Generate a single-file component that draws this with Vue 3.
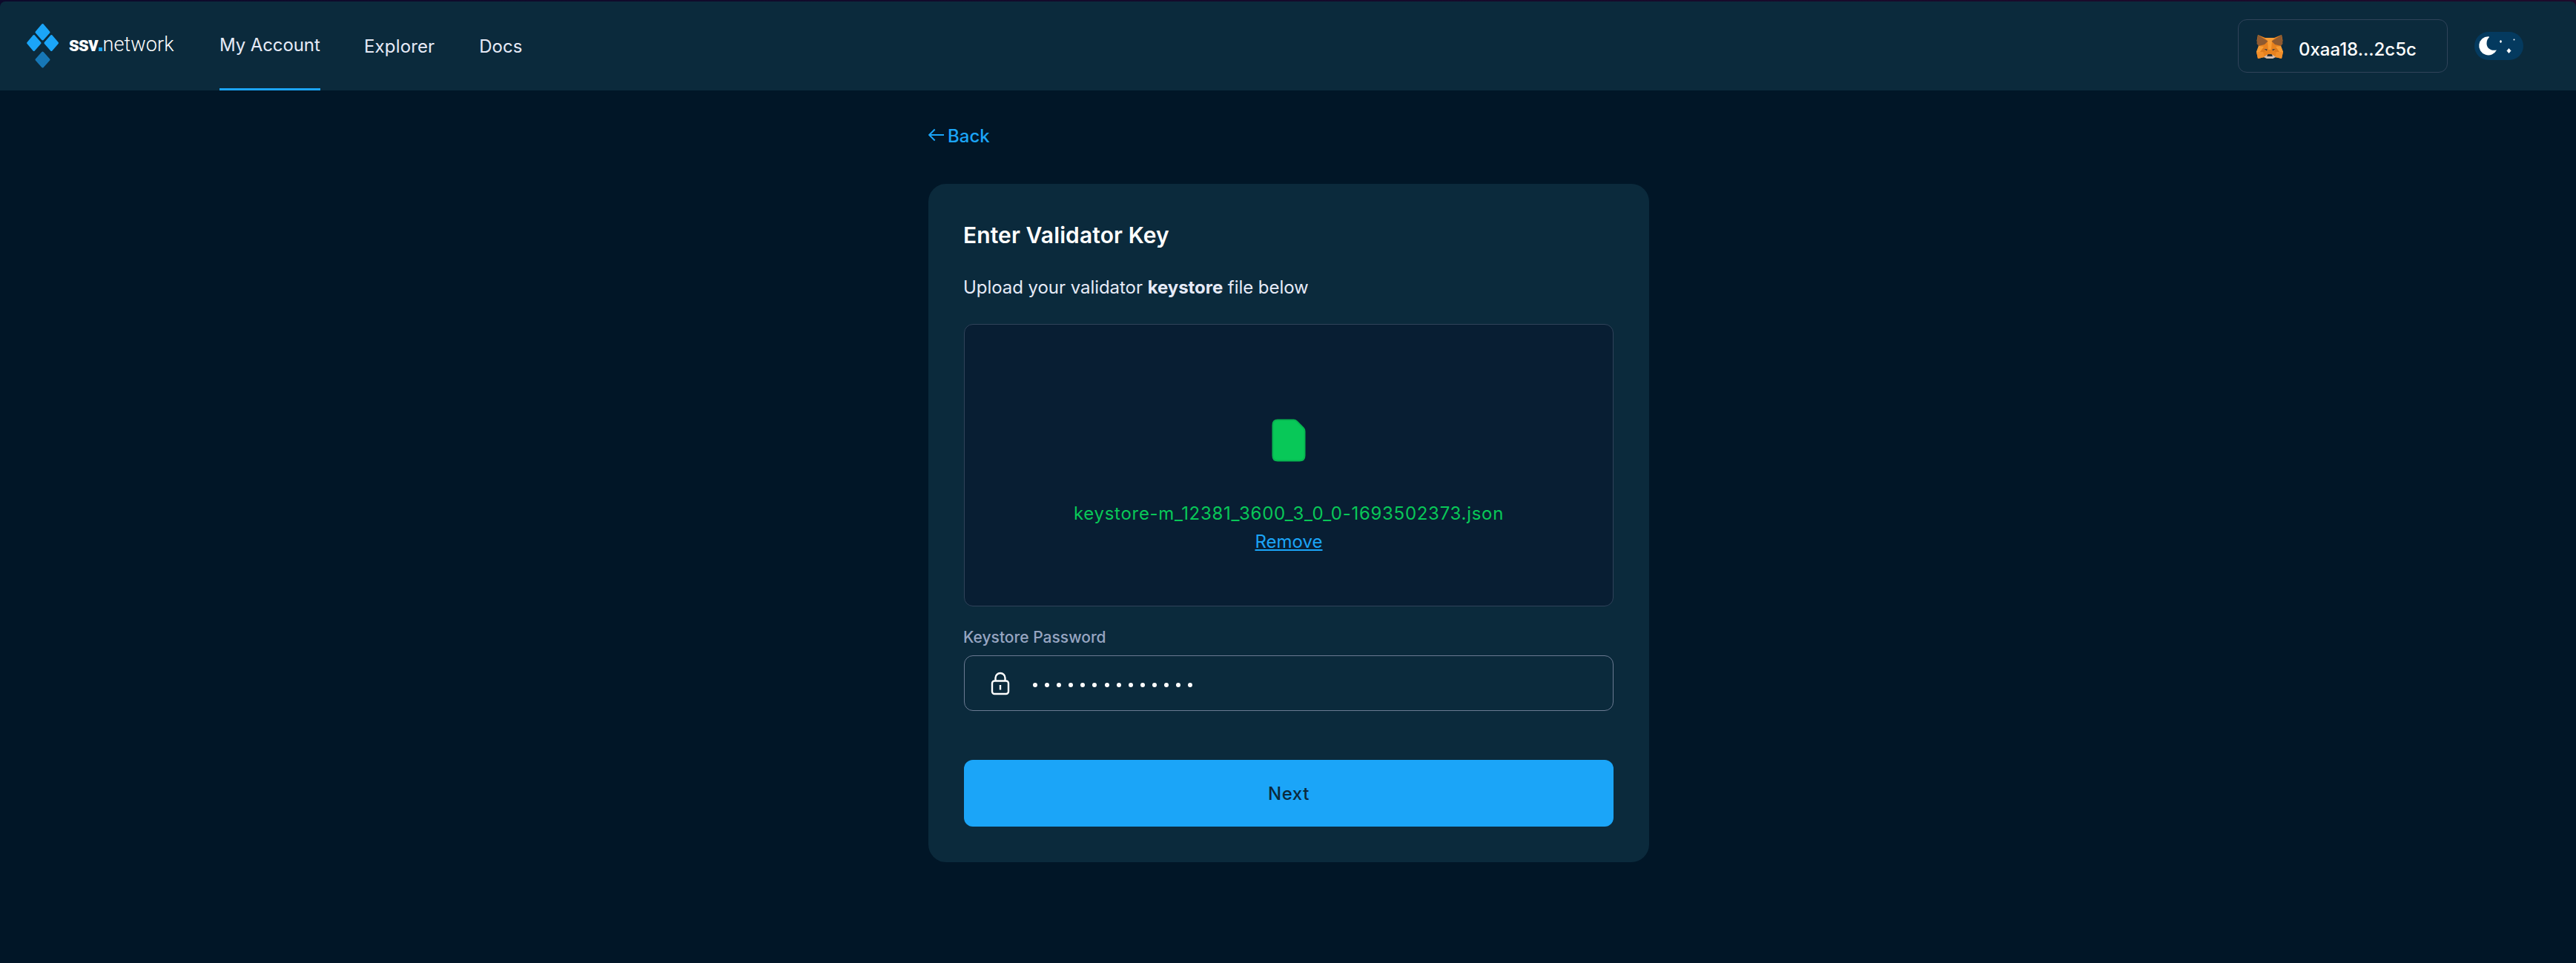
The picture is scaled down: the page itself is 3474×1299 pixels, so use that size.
<script setup>
import { ref } from 'vue'

const links = [
  { label: 'My Account', key: 'account', active: true },
  { label: 'Explorer', key: 'explorer' },
  { label: 'Docs', key: 'docs' },
]
const fileName = ref('keystore-m_12381_3600_3_0_0-1693502373.json')
const passwordLength = 14
</script>

<template>
  <div class="page">
    <div class="top-strip">
      <header class="header">
        <svg class="logo" width="44" height="62" viewBox="0 0 44 62">
          <g fill="#1ba5f8" stroke="#1ba5f8" stroke-width="3" stroke-linejoin="round">
            <path d="M21.5 2.5 30 12.5 21.5 22 13 12.5Z" />
            <path d="M9.7 17.5 18 27 9.7 36.5 1.7 27Z" />
            <path d="M33.3 17.5 41.5 27 33.3 36.5 25 27Z" />
          </g>
          <path d="M21.5 40 30 49.5 21.5 59 13 49.5Z" fill="#1777b6" stroke="#1777b6" stroke-width="3" stroke-linejoin="round" />
        </svg>
        <div class="brand"><b>ssv</b><i></i><span>network</span></div>
        <nav class="nav">
          <a v-for="l in links" :key="l.key" :class="['link', l.key, { active: l.active }]">{{ l.label }}</a>
        </nav>
        <div class="wallet">
          <svg class="fox" width="36" height="32" viewBox="0 0 36 32">
            <path d="M2 0 12 4H24L34 0 35.5 8 33 15 36 23 34 32 25 30 22 32H14L11 30 2 32 0 23 3 15 .5 8Z" fill="#e8821e" />
            <path d="M11 4H25L21 8 20 20H16L15 8Z" fill="#f89d35" />
            <path d="M3 15 10 16 5 23H0ZM33 15 26 16 31 23H36Z" fill="#f89d35" />
            <path d="M0 23H9L11 30 2 32ZM36 23H27L25 30 34 32Z" fill="#f28f2a" />
            <path d="M5 23 10 17 12 23ZM31 23 26 17 24 23Z" fill="#dc7a1d" />
            <path d="M2 0 15.5 8.5 11 13 3 15 .5 12 1.2 6ZM34 0 20.5 8.5 25 13 33 15 35.5 12 34.8 6Z" fill="#8f5a30" />
            <path d="M10.5 19 14.5 19.5 14 21.5ZM25.5 19 21.5 19.5 22 21.5Z" fill="#233447" />
            <path d="M10 30 14 27H22L26 30 22 32H14Z" fill="#d5bfb2" />
            <path d="M15.5 26H20.5L22 29H14Z" fill="#2f3134" />
          </svg>
          <span>0xaa18...2c5c</span>
        </div>
        <div class="theme-toggle">
          <svg width="66" height="38" viewBox="0 0 66 38">
            <path d="M18.5 6.2A12.6 12.6 0 1 0 30 24.5C22 26 16.5 22 16.5 15.500 16.5 11.5 18 8.8 20 7.2 20 6.5 19.5 6.2 18.5 6.2Z" fill="#fff" />
            <path d="M35.5 11 36.9 13 35.5 15 34.1 13Z" fill="#fff" stroke="#fff" stroke-width=".4" />
            <circle cx="53.5" cy="10.4" r="1" fill="#fff" />
            <path d="M46.5 22.5 49 25.5 46.5 28.5 44 25.5Z" fill="#fff" stroke="#fff" stroke-width=".8" stroke-linejoin="round" />
          </svg>
        </div>
      </header>
    </div>

    <main class="content">
      <a class="back">
        <svg width="22" height="18" viewBox="0 0 22 18" fill="none" stroke="#1ba5f8" stroke-width="2">
          <path d="M21 9H1.200M8.700 1.500 1.200 9l7.500 7.500" />
        </svg>
        <span>Back</span>
      </a>

      <section class="card">
        <h1>Enter Validator Key</h1>
        <p class="lead">Upload your validator <b>keystore</b> file below</p>

        <div class="drop">
          <svg width="46" height="58" viewBox="0 0 46 58">
            <path d="M8 1.5H29.5Q32 1.5 34 3.5L42.5 12Q44.5 14 44.5 17V49.5Q44.5 56.500 37.5 56.5H8Q1.5 56.5 1.5 49.5V8.5Q1.5 1.5 8 1.5Z" fill="#08c858" stroke="#07b650" stroke-width="2" />
          </svg>
          <div class="file-name">{{ fileName }}</div>
          <a class="remove">Remove</a>
        </div>

        <label class="label">Keystore Password</label>
        <div class="input">
          <svg width="26" height="32" viewBox="0 0 26 32" fill="none" stroke="#fff" stroke-width="2.4">
            <rect x="2" y="12.500" width="22" height="17.500" rx="3.200" />
            <path d="M6.500 12.500V8.500a6.500 6.500 0 0 1 13 0v4M13 18v6.500" />
          </svg>
          <div class="dots"><i v-for="n in passwordLength" :key="n"></i></div>
        </div>

        <button class="next">Next</button>
      </section>
    </main>
  </div>
</template>

<style>
body {
  margin: 0;
  background: #011627;
}
</style>

<style scoped>
.page {
  box-sizing: border-box;
  min-height: 1299px;
  background: #011627;
  color: #e6eaf7;
  font: 400 24px/32px Inter, "Liberation Sans", sans-serif;
}
.top-strip {
  padding-top: 2px;
  background: linear-gradient(90deg, #0d0a2b, #1e0b2b);
}
.header {
  display: flex;
  align-items: center;
  box-sizing: border-box;
  height: 120px;
  padding: 0 71px 0 36px;
  border-radius: 7px 7px 0 0;
  background: #0b2a3c;
}
.brand {
  display: flex;
  align-items: baseline;
  margin: 0 0 4px 13px;
  width: 203px;
  font-family: Roboto, sans-serif;
  font-size: 27px;
  color: #fff;
}
.brand b {
  width: 40px;
  font-weight: 800;
  letter-spacing: -0.9px;
}
.brand i {
  width: 5px;
  height: 5px;
  background: #1ba5f8;
}
.brand span {
  margin-left: 0.5px;
  font-weight: 300;
  letter-spacing: 0.1px;
}
.nav {
  display: flex;
  align-self: stretch;
  gap: 60px;
}
.link {
  display: flex;
  align-items: center;
}
.active {
  width: 136px;
  white-space: nowrap;
  letter-spacing: -0.1px;
  border-bottom: 3px solid #1ba5f8;
}
.explorer {
  padding-top: 1px;
  margin-left: -1px;
  letter-spacing: 0.15px;
}
.docs {
  padding-top: 1px;
}
.wallet {
  display: flex;
  align-items: center;
  box-sizing: border-box;
  width: 283px;
  height: 72px;
  margin-left: auto;
  padding-left: 24px;
  border: 1px solid #30435a;
  border-radius: 12px;
  color: #fff;
  font-weight: 450;
}
.fox {
  margin-top: 2px;
}
.wallet span {
  margin: 10px 0 0 21px;
}
.theme-toggle {
  width: 66px;
  height: 38px;
  margin-left: 36px;
  border-radius: 19px;
  background: #043a5f;
}
.theme-toggle svg {
  display: block;
}
.content {
  width: 972px;
  margin: 0 auto;
  padding: 44px 0 0 2px;
}
.back {
  display: flex;
  align-items: center;
  gap: 4px;
  color: #1ba5f8;
  font-weight: 450;
}
.back span {
  padding-top: 2px;
  margin-bottom: -2px;
}
.card {
  display: flex;
  flex-direction: column;
  box-sizing: border-box;
  height: 915px;
  margin-top: 50px;
  padding: 48px;
  border-radius: 24px;
  background: #0b2a3c;
}
h1 {
  margin: 0 0 0 -1px;
  color: #fff;
  font-size: 30px;
  font-weight: 600;
  line-height: 42px;
  letter-spacing: 0.1px;
}
.lead {
  margin: 34px 0 33px -1px;
  letter-spacing: -0.05px;
}
.lead b {
  font-weight: 700;
}
.drop {
  display: flex;
  flex-direction: column;
  align-items: center;
  box-sizing: border-box;
  height: 381px;
  padding-top: 127px;
  border: 1px solid #30435a;
  border-radius: 12px;
  background: #081e33;
  line-height: 38px;
}
.file-name {
  margin-top: 51px;
  color: #08c858;
  letter-spacing: 0.71px;
}
.remove {
  color: #1ba5f8;
  text-decoration: underline;
  text-decoration-thickness: 2px;
  text-underline-offset: 2px;
}
.label {
  margin: 27px 0 9px -1px;
  color: #97a5c1;
  font-size: 21px;
  font-weight: 500;
  line-height: 30px;
}
.input {
  display: flex;
  align-items: center;
  box-sizing: border-box;
  height: 75px;
  padding-left: 35px;
  border: 1px solid #6b7a92;
  border-radius: 12px;
}
.dots {
  display: flex;
  gap: 10.1px;
  margin: 5px 0 0 31px;
}
.dots i {
  width: 6px;
  height: 6px;
  border-radius: 50%;
  background: #fff;
}
.next {
  height: 90px;
  margin-top: 66px;
  padding: 2px 0 0;
  border: 0;
  border-radius: 12px;
  background: #1ba5f8;
  color: #0b2a3c;
  font: 500 24px/32px Inter, sans-serif;
  letter-spacing: 0.6px;
}
</style>
